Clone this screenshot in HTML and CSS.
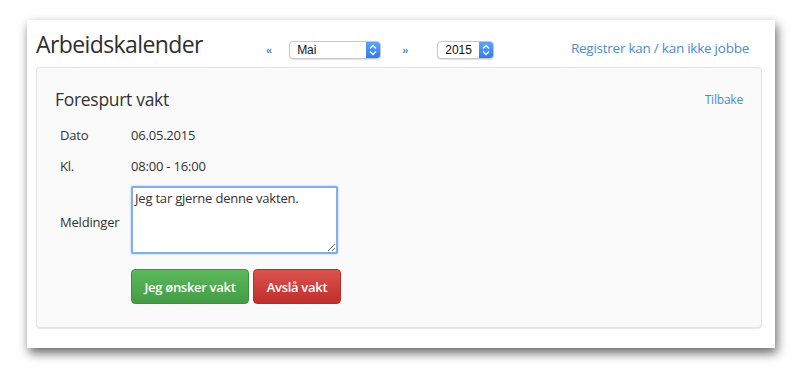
FILE: index.html
```html
<!DOCTYPE html>
<html>
<head>
<meta charset="utf-8">
<link rel="stylesheet" href="styles.css">
</head>
<body>
<div class="window">
  <div class="header">
    <h1 class="title">Arbeidskalender</h1>
    <div class="nav">
      <a class="arrow">&laquo;</a>
      <div class="select month"><span class="sel-text">Mai</span><span class="sel-btn"><svg width="8" height="12" viewBox="0 0 8 12"><path d="M1 4.5 L4 1.5 L7 4.5 M1 7.5 L4 10.5 L7 7.5" fill="none" stroke="#fff" stroke-width="1.3"/></svg></span></div>
      <a class="arrow">&raquo;</a>
      <div class="select year"><span class="sel-text">2015</span><span class="sel-btn"><svg width="8" height="12" viewBox="0 0 8 12"><path d="M1 4.5 L4 1.5 L7 4.5 M1 7.5 L4 10.5 L7 7.5" fill="none" stroke="#fff" stroke-width="1.3"/></svg></span></div>
    </div>
    <a class="reg-link">Registrer kan / kan ikke jobbe</a>
  </div>
  <div class="panel">
    <div class="panel-head">
      <h2 class="panel-title">Forespurt vakt</h2>
      <a class="back">Tilbake</a>
    </div>
    <div class="row"><span class="label">Dato</span><span class="value">06.05.2015</span></div>
    <div class="row"><span class="label">Kl.</span><span class="value">08:00 - 16:00</span></div>
    <div class="row msg-row"><span class="label">Meldinger</span><textarea class="msg">Jeg tar gjerne denne vakten.</textarea></div>
    <div class="buttons">
      <button class="btn btn-green">Jeg ønsker vakt</button>
      <button class="btn btn-red">Avslå vakt</button>
    </div>
  </div>
</div>
</body>
</html>
```
FILE: styles.css
```css
* { box-sizing: border-box; }
html, body { margin: 0; padding: 0; background: #fff; }
body {
  font-family: "Open Sans", sans-serif;
  color: #333;
  padding: 20px 0 0 27px;
  min-height: 380px;
}
.window {
  width: 748px;
  height: 328px;
  background: #fff;
  box-shadow: 2px 5px 10px rgba(0,0,0,0.6);
  padding: 0 13px 0 9px;
}
.header {
  display: flex;
  align-items: center;
  height: 47px;
}
.title {
  margin: 0;
  font-family: "Open Sans", sans-serif;
  font-weight: 400;
  font-size: 23px;
  letter-spacing: -0.6px;
  color: #2e2e2e;
  line-height: 47px;
  padding-top: 2px;
  width: 226px;
}
.nav {
  display: flex;
  align-items: center;
  padding-top: 13px;
}
.arrow {
  color: #4f86cc;
  font-size: 11px;
  font-weight: 700;
  font-family: "Liberation Sans", sans-serif;
}
.nav .arrow:first-child { margin-left: 4px; margin-right: 17px; }
.nav .month + .arrow { margin-left: 21px; margin-right: 29px; }
.select {
  display: flex;
  height: 18px;
  border: 1px solid #c8c8c8;
  border-radius: 4px;
  background: #fff;
  overflow: hidden;
  box-shadow: 0 1px 1px rgba(0,0,0,0.12);
}
.month { width: 92px; }
.year { width: 57px; }
.sel-text {
  flex: 1;
  font-family: "Liberation Sans", sans-serif;
  font-size: 12px;
  color: #111;
  line-height: 16px;
  padding-left: 7px;
}
.sel-btn {
  width: 14px;
  background: linear-gradient(#5ba3f8, #2f7cf0);
  display: flex;
  align-items: center;
  justify-content: center;
}
.reg-link {
  margin-left: auto;
  margin-right: 13px;
  color: #4a8ccd;
  font-size: 13.5px;
  padding-top: 9px;
  letter-spacing: -0.25px;
}
.panel {
  width: 726px;
  height: 261px;
  background: #fafafa;
  border: 1px solid #e3e3e3;
  border-radius: 4px;
  box-shadow: 0 1px 1px rgba(0,0,0,0.1);
  padding: 19px 18px 0 18px;
}
.panel-head {
  display: flex;
  align-items: center;
  justify-content: space-between;
  height: 24px;
  margin-bottom: 8px;
}
.panel-title {
  margin: 0;
  font-weight: 400;
  font-size: 17.5px;
  letter-spacing: -0.3px;
  color: #333;
}
.back {
  color: #4a8ccd;
  font-size: 12px;
  letter-spacing: -0.2px;
}
.row {
  display: flex;
  align-items: center;
  font-size: 13px;
  height: 31px;
  letter-spacing: -0.2px;
}
.label {
  width: 76px;
  padding-left: 5px;
  color: #333;
}
.value { color: #333; }
.msg-row {
  height: 74px;
}
.msg-row .label { padding-top: 8px; }
.msg {
  width: 207px;
  height: 68px;
  margin: 4px 0 0 0;
  border: 2px solid #7fb0ea;
  box-shadow: 0 0 2px rgba(82,150,236,0.6);
  border-radius: 2px;
  font-family: "Open Sans", sans-serif;
  font-size: 13px;
  letter-spacing: -0.2px;
  color: #333;
  padding: 1px 2px;
  resize: vertical;
  outline: none;
}
.buttons {
  display: flex;
  gap: 4px;
  padding-left: 76px;
  margin-top: 14px;
}
.btn {
  height: 35px;
  border-radius: 4px;
  font-family: "Open Sans", sans-serif;
  font-size: 13px;
  font-weight: 600;
  letter-spacing: -0.3px;
  color: #fff;
  padding: 0;
  cursor: pointer;
}
.btn-green {
  width: 118px;
  background: linear-gradient(#5cb85c, #449d44);
  border: 1px solid #3e8f3e;
}
.btn-red {
  width: 88px;
  background: linear-gradient(#d9534f, #c12e2a);
  border: 1px solid #b92c28;
}
```
